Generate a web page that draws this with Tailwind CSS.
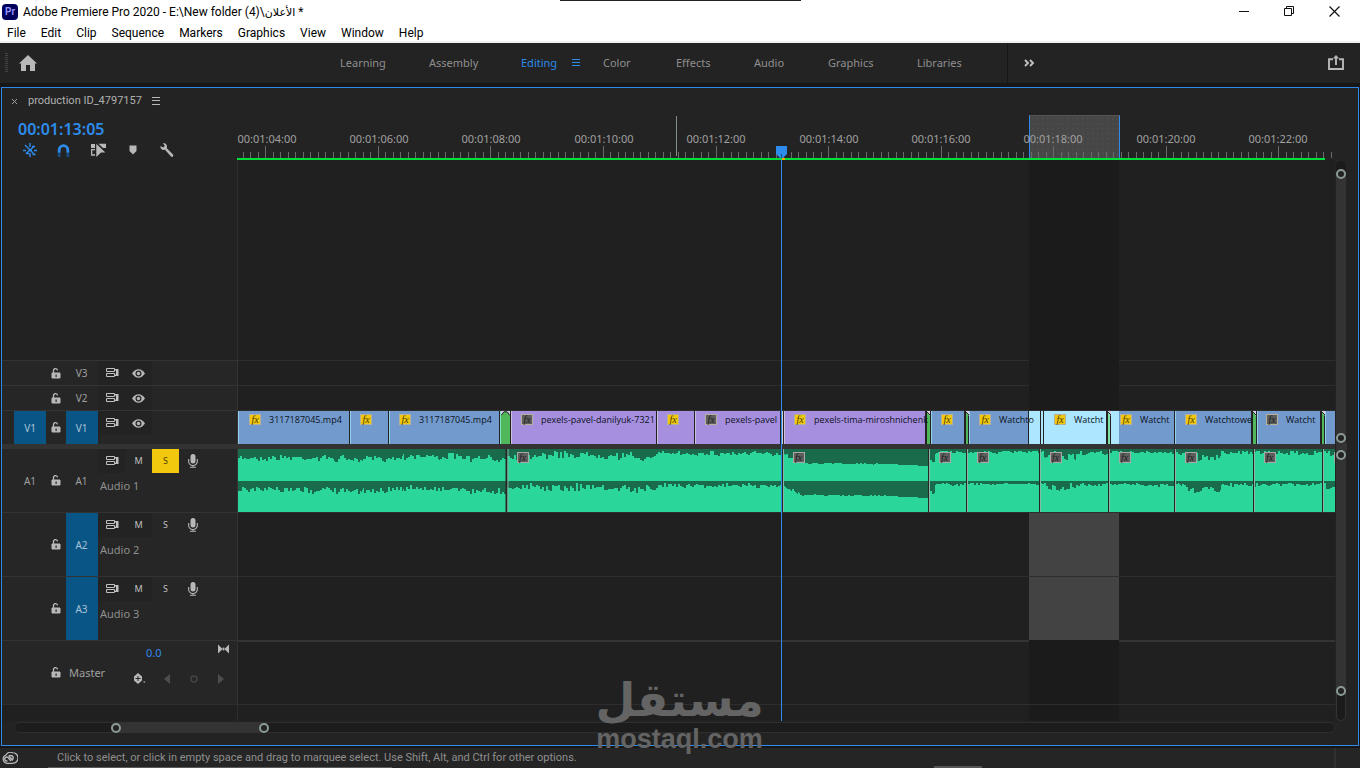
<!DOCTYPE html>
<html lang="en">
<head>
    <meta charset="UTF-8">
    <meta name="viewport" content="width=device-width, initial-scale=1.0">
    <title>Adobe Premiere Pro 2020</title>
    <script src="https://cdn.jsdelivr.net/npm/@tailwindcss/browser@4"></script>
</head>
<body class="relative flex h-screen flex-col overflow-hidden bg-[#171717] font-['Noto_Sans',sans-serif] text-[11px] leading-4 text-[#a0a0a0]">

    <!-- Shared icons -->
    <svg class="hidden">
        <symbol id="lock" viewBox="0 0 10 11"><path d="M1 5h8v5H1z" fill="#b8b8b8" stroke="#b8b8b8"/><path d="M2.5 5V3a2 2 0 0 1 4-.6" fill="none" stroke="#b8b8b8" stroke-width="1.3"/><path d="M4.5 6.5h1.2V9H4.5z" fill="#262626"/></symbol>
        <symbol id="sync" viewBox="0 0 13 10"><path d="M.5.5h8v3h-8zM.5 5.500h8v3h-8z" fill="none" stroke="#c0c0c0"/><path d="M8 1h4.500v7H8V6.500h2v-4H8z" fill="#c0c0c0"/></symbol>
        <symbol id="eye" viewBox="0 0 13 9"><path d="M0 4.500Q3 .3 6.500.3T13 4.500Q10 8.700 6.500 8.700T0 4.500z" fill="#b8b8b8"/><circle cx="6.500" cy="4.500" r="3" fill="#262626"/><circle cx="6.500" cy="4.500" r="1.700" fill="#b8b8b8"/></symbol>
        <symbol id="mic" viewBox="0 0 10 14"><rect x="2.500" width="5" height="9.500" rx="2.500" fill="#b8b8b8"/><path d="M.7 5v2.500a4.300 4 0 0 0 8.600 0V5M5 11v2.300M2 13.300h6" fill="none" stroke="#b8b8b8" stroke-width="1.100"/></symbol>
    </svg>

    <!-- Title bar and menus -->
    <header class="relative flex h-[43px] shrink-0 flex-col border-b-2 border-[#f0f0f0] bg-white font-[Roboto,'DejaVu_Sans',sans-serif] text-xs text-black">
        <div class="absolute top-0 left-[560px] h-px w-[241px] bg-[#222]"></div>
        <div class="flex h-6 items-center justify-between">
            <div class="flex items-center gap-[5px] pl-0.5">
                <div class="flex size-4 items-center justify-center rounded-sm bg-[#00005b] text-[10px] font-semibold text-[#9999ff]">Pr</div>
                <h1>Adobe Premiere Pro 2020 - E:\New folder (4)\<bdi class="text-[11px]">الأعلان</bdi> *</h1>
            </div>
            <div class="flex gap-[34px] pr-5">
                <button aria-label="Minimize"><svg class="h-3 w-[11px]" viewBox="0 0 11 12"><path d="M0 5.500h10" stroke="#111"/></svg></button>
                <button aria-label="Restore"><svg class="h-3 w-[11px]" viewBox="0 0 11 12"><path d="M.5 2.500h7v7h-7zM2.500 2.500v-2h7v7h-2" fill="none" stroke="#111"/></svg></button>
                <button aria-label="Close"><svg class="h-3 w-[11px]" viewBox="0 0 11 12"><path d="M.5.500l10 10M10.500.500l-10 10" stroke="#111" stroke-width="1.200"/></svg></button>
            </div>
        </div>
        <nav class="flex gap-[15px] pt-px pl-[7px]">
            <button>File</button><button>Edit</button><button>Clip</button><button>Sequence</button><button>Markers</button><button>Graphics</button><button>View</button><button>Window</button><button>Help</button>
        </nav>
    </header>

    <!-- Workspaces -->
    <div class="flex h-10 shrink-0 items-center bg-[#232323]">
        <div class="flex w-[340px] items-center gap-[11px] pl-[5px]">
            <div class="h-5 w-[3px] bg-[repeating-linear-gradient(#444_0_1px,#232323_1px_2px)]"></div>
            <button aria-label="Home"><svg class="h-4 w-[18px]" viewBox="0 0 18 16"><path d="M9 0l9 8.500h-2V16h-5v-6H7v6H2V8.500H0z" fill="#b8b8b8"/></svg></button>
        </div>
        <nav class="flex h-full items-center text-[#8f8f8f]">
            <button class="w-[89px] text-left">Learning</button>
            <button class="w-[92px] text-left">Assembly</button>
            <button class="flex w-[82px] items-center gap-[15px] text-[#2d8ceb]">Editing
                <svg class="h-2 w-2" viewBox="0 0 8 8"><path d="M0 .5h8M0 3.500h8M0 6.500h8" stroke="#2d8ceb"/></svg></button>
            <button class="w-[73px] text-left">Color</button>
            <button class="w-[78px] text-left">Effects</button>
            <button class="w-[74px] text-left">Audio</button>
            <button class="w-[89px] text-left">Graphics</button>
            <button class="w-[90px] text-left">Libraries</button>
        </nav>
        <button aria-label="More workspaces" class="h-full border-l border-[#161616] pl-4"><svg class="h-[9px] w-[11px]" viewBox="0 0 11 9"><path d="M1 1l3 3-3 3M6 1l3 3-3 3" fill="none" stroke="#c0c0c0" stroke-width="1.900"/></svg></button>
        <button aria-label="Quick export" class="mr-4 ml-auto"><svg class="h-4 w-4" viewBox="0 0 16 16"><path d="M5 4.200H1V14h14V4.200h-4M8 10V2" fill="none" stroke="#b8b8b8" stroke-width="1.900"/><path d="M4.800 3.500L8 0l3.200 3.500z" fill="#b8b8b8"/></svg></button>
    </div>

    <!-- Timeline panel -->
    <main class="mx-px mt-1 mb-0.5 flex min-h-0 flex-1 flex-col border border-[#2d8ceb] bg-[#232323]">
        <div class="flex h-[26px] shrink-0 items-center pl-[10px]">
            <button aria-label="Close tab"><svg class="size-[5px]" viewBox="0 0 5 5"><path d="M0 0l5 5M5 0L0 5" stroke="#a0a0a0"/></svg></button>
            <h2 class="ml-[11px] font-[Roboto,sans-serif] text-[#b0b0b0]">production ID_4797157</h2>
            <button aria-label="Panel menu" class="ml-[10px]"><svg class="h-2 w-2" viewBox="0 0 8 8"><path d="M0 .5h8M0 3.500h8M0 7.500h8" stroke="#b8b8b8"/></svg></button>
        </div>

        <div class="flex min-h-0 flex-1">
            <div class="relative flex min-w-0 flex-1 flex-col">
                <div class="flex h-[46px] shrink-0">
                    <div class="w-[236px] shrink-0 pl-4">
                        <div class="pt-1.5 text-base leading-[18px] font-semibold text-[#2d8ceb]">00:01:13:05</div>
                        <div class="mt-1 flex items-center pl-1">
                            <button aria-label="Insert as nests" class="w-[35px]"><svg class="h-4 w-4" viewBox="0 0 16 16"><path d="M3 3l10 10M12 4.500l-8 7M8 1v4M8 11v4M1 8.500h3M12 8.500h3M7 8.500h3M10 4.500h3M10.500 12.500h3M4 11.500h3" fill="none" stroke="#2d8ceb" stroke-width="1.400"/></svg></button>
                            <button aria-label="Snap" class="w-[34px]"><svg class="h-[13px] w-[13px]" viewBox="0 0 12 12"><path d="M2 8V5.500a4 4 0 0 1 8 0V8" fill="none" stroke="#2d8ceb" stroke-width="2.600"/><path d="M.7 8.500h2.600V12H.7zM8.700 8.500h2.600V12H8.700z" fill="#164f87"/></svg></button>
                            <button aria-label="Linked selection" class="w-[38px]"><svg class="h-[14px] w-[15px]" viewBox="0 0 15 14"><path d="M0 1h4v4H0zM7.500.8H15V5h-3z" fill="#b8b8b8"/><path d="M4 6.700H.7V12H4" fill="none" stroke="#b8b8b8" stroke-width="1.300"/><path d="M5.300.8L14.300 9.500H10L5.300 14z" fill="#b8b8b8"/></svg></button>
                            <button aria-label="Add marker" class="w-[30px]"><svg class="h-[10px] w-[8px]" viewBox="0 0 8 10"><path d="M.5.500h7V6L4 9.500.5 6z" fill="#b8b8b8"/></svg></button>
                            <button aria-label="Timeline settings"><svg class="h-4 w-4" viewBox="0 0 16 16"><path d="M5 1l-1 .5 1.800 2.300-1.500 1.700L1.500 4C1 6.500 3 8.500 6 7.800l6 6.700c1.200 1.200 3.200-.6 2-2L7.800 6.200C8.500 3.500 7.300 1.500 5 1z" fill="#b8b8b8"/></svg></button>
                        </div>
                    </div>
                    <!-- Time ruler -->
                    <div id="ruler" class="relative min-w-0 flex-1">
                        <div class="absolute top-px bottom-0 left-[791px] w-[91px] border-x border-t border-[#2d8ceb] border-t-[#555] bg-[#464646] bg-[radial-gradient(#4c4c4c_1px,#464646_1px)] bg-size-[5px_5px]"></div>
                        <svg id="ticks" class="absolute inset-0 h-full w-full"></svg>
                        <div class="absolute top-[2px] left-[438px] h-10 w-px bg-[#7f8f88]"></div>
                        <div class="absolute right-[10px] bottom-0 left-[-1px] h-0.5 bg-[#00e03c]"></div>
                        <div class="absolute bottom-0 left-[544px] h-0.5 w-[3px] bg-[#f5a800]"></div>
                    </div>
                </div>

                <!-- Tracks -->
                <div class="relative flex min-h-0 flex-1 flex-col bg-[#202020]">
                    <!-- In/out range -->
                    <div class="absolute top-0 bottom-0 left-[1027px] w-[90px] bg-[#1b1b1b]"></div>

                    <div class="w-[236px] flex-1 border-r border-[#2e2e2e] bg-[#222]"></div>

                    <div class="flex h-[25px] shrink-0">
                        <div class="flex w-[236px] shrink-0 items-center border-t border-r border-[#333] bg-[#262626] pl-11">
                            <button aria-label="Lock V3" class="w-5 pl-[5px]"><svg class="h-[11px] w-[10px]"><use href="#lock"/></svg></button>
                            <button class="w-8 pr-px text-[10px]">V3</button>
                            <button aria-label="Sync lock V3" class="flex h-full w-[27px] items-center bg-[#232323] pl-2"><svg class="h-[10px] w-[13px]"><use href="#sync"/></svg></button>
                            <button aria-label="Toggle output V3" class="flex h-full w-[27px] items-center bg-[#232323] pl-[7px]"><svg class="h-[9px] w-[13px]"><use href="#eye"/></svg></button>
                        </div>
                        <div class="w-[791px] border-t border-[#2e2e2e]"></div>
                        <div class="ml-[90px] flex-1 border-t border-[#2e2e2e]"></div>
                    </div>
                    <div class="flex h-[25px] shrink-0">
                        <div class="flex w-[236px] shrink-0 items-center border-t border-r border-[#333] bg-[#262626] pl-11">
                            <button aria-label="Lock V2" class="w-5 pl-[5px]"><svg class="h-[11px] w-[10px]"><use href="#lock"/></svg></button>
                            <button class="w-8 pr-px text-[10px]">V2</button>
                            <button aria-label="Sync lock V2" class="flex h-full w-[27px] items-center bg-[#232323] pl-2"><svg class="h-[10px] w-[13px]"><use href="#sync"/></svg></button>
                            <button aria-label="Toggle output V2" class="flex h-full w-[27px] items-center bg-[#232323] pl-[7px]"><svg class="h-[9px] w-[13px]"><use href="#eye"/></svg></button>
                        </div>
                        <div class="w-[791px] border-t border-[#2e2e2e]"></div>
                        <div class="ml-[90px] flex-1 border-t border-[#2e2e2e]"></div>
                    </div>

                    <!-- V1 -->
                    <div class="relative flex h-[34px] shrink-0">
                        <div class="flex w-[236px] shrink-0 items-center border-t border-r border-[#333] bg-[#262626] pl-3 text-[10px]">
                            <button class="h-full w-8 bg-[#095586] text-[#a9c3d6]">V1</button>
                            <button aria-label="Lock V1" class="w-5 pl-[5px]"><svg class="h-[11px] w-[10px]"><use href="#lock"/></svg></button>
                            <button class="h-full w-8 bg-[#095586] pr-px text-[#a9c3d6]">V1</button>
                            <button aria-label="Sync lock V1" class="flex h-6 w-[27px] items-center self-start bg-[#232323] pl-2"><svg class="h-[10px] w-[13px]"><use href="#sync"/></svg></button>
                            <button aria-label="Toggle output V1" class="flex h-6 w-[27px] items-center self-start bg-[#232323] pl-[7px]"><svg class="h-[9px] w-[13px]"><use href="#eye"/></svg></button>
                        </div>
                        <div id="clips" class="flex min-w-0 flex-1 overflow-hidden border-t border-[#2e2e2e] font-['Open_Sans',sans-serif] text-[9px] text-[#0b1220]"></div>
                    </div>

                    <div class="relative h-[5px] shrink-0 bg-[#333]"></div>

                    <!-- A1 -->
                    <div class="relative flex h-[63px] shrink-0">
                        <div class="flex w-[236px] shrink-0 items-center border-r border-[#333] bg-[#262626] pl-3">
                            <button class="w-8 text-[10px]">A1</button>
                            <button aria-label="Lock A1" class="w-5 pl-[5px]"><svg class="h-[11px] w-[10px]"><use href="#lock"/></svg></button>
                            <button class="w-8 pr-px text-[10px]">A1</button>
                            <div class="h-full">
                                <div class="flex h-6 items-center text-[9px] text-[#c0c0c0]">
                                    <button aria-label="Sync lock A1" class="flex h-full w-[27px] items-center bg-[#232323] pl-2"><svg class="h-[10px] w-[13px]"><use href="#sync"/></svg></button>
                                    <button class="h-full w-[27px]">M</button>
                                    <button class="h-full w-[27px] bg-[#f2c80f] text-[#4d4008]">S</button>
                                    <button aria-label="Record A1" class="w-[27px] pl-[9px]"><svg class="h-[14px] w-[10px]"><use href="#mic"/></svg></button>
                                </div>
                                <div class="pt-[5px] pl-[2px] text-[#8f8f8f]">Audio 1</div>
                            </div>
                        </div>
                        <div class="relative min-w-0 flex-1 overflow-hidden bg-[#2bd69a]">
                            <svg id="waves" class="absolute inset-0 h-full w-full"></svg>
                        </div>
                    </div>

                    <!-- A2 -->
                    <div class="relative flex h-16 shrink-0">
                        <div class="flex w-[236px] shrink-0 items-center border-t border-r border-[#333] bg-[#262626] pl-11">
                            <button aria-label="Lock A2" class="w-5 pl-[5px]"><svg class="h-[11px] w-[10px]"><use href="#lock"/></svg></button>
                            <button class="h-full w-8 bg-[#095586] pr-px text-[10px] text-[#a9c3d6]">A2</button>
                            <div class="h-full">
                                <div class="flex h-6 items-center text-[9px] text-[#c0c0c0]">
                                    <button aria-label="Sync lock A2" class="flex h-full w-[27px] items-center bg-[#232323] pl-2"><svg class="h-[10px] w-[13px]"><use href="#sync"/></svg></button>
                                    <button class="h-full w-[27px] bg-[#232323]">M</button>
                                    <button class="h-full w-[27px]">S</button>
                                    <button aria-label="Record A2" class="w-[27px] pl-[9px]"><svg class="h-[14px] w-[10px]"><use href="#mic"/></svg></button>
                                </div>
                                <div class="pt-[5px] pl-[2px] text-[#8f8f8f]">Audio 2</div>
                            </div>
                        </div>
                        <div class="w-[791px] border-t border-[#2e2e2e]"></div>
                        <div class="w-[90px] border-t border-[#2e2e2e] bg-[#434343]"></div>
                        <div class="flex-1 border-t border-[#2e2e2e]"></div>
                    </div>
                    <!-- A3 -->
                    <div class="relative flex h-16 shrink-0">
                        <div class="flex w-[236px] shrink-0 items-center border-t border-r border-[#333] bg-[#262626] pl-11">
                            <button aria-label="Lock A3" class="w-5 pl-[5px]"><svg class="h-[11px] w-[10px]"><use href="#lock"/></svg></button>
                            <button class="h-full w-8 bg-[#095586] pr-px text-[10px] text-[#a9c3d6]">A3</button>
                            <div class="h-full">
                                <div class="flex h-6 items-center text-[9px] text-[#c0c0c0]">
                                    <button aria-label="Sync lock A3" class="flex h-full w-[27px] items-center bg-[#232323] pl-2"><svg class="h-[10px] w-[13px]"><use href="#sync"/></svg></button>
                                    <button class="h-full w-[27px] bg-[#232323]">M</button>
                                    <button class="h-full w-[27px]">S</button>
                                    <button aria-label="Record A3" class="w-[27px] pl-[9px]"><svg class="h-[14px] w-[10px]"><use href="#mic"/></svg></button>
                                </div>
                                <div class="pt-[5px] pl-[2px] text-[#8f8f8f]">Audio 3</div>
                            </div>
                        </div>
                        <div class="w-[791px] border-t border-[#2e2e2e]"></div>
                        <div class="w-[90px] border-t border-[#2e2e2e] bg-[#434343]"></div>
                        <div class="flex-1 border-t border-[#2e2e2e]"></div>
                    </div>

                    <!-- Master -->
                    <div class="relative flex h-16 shrink-0">
                        <div class="flex w-[236px] shrink-0 items-center border-t border-r border-[#333] bg-[#262626] pl-11">
                            <button aria-label="Lock Master" class="w-5 pl-[5px]"><svg class="h-[11px] w-[10px]"><use href="#lock"/></svg></button>
                            <div class="w-[55px] pl-[3px]">Master</div>
                            <div class="flex h-full flex-1 flex-col justify-between pt-[2px] pb-5">
                                <div class="flex justify-between pr-2 pl-[25px]">
                                    <input aria-label="Master volume" value="0.0" class="mt-[2px] w-8 bg-transparent text-[#2d8ceb]">
                                    <svg class="h-3 w-[11px]" viewBox="0 0 12 12"><path d="M0 1l5 5-5 5zM12 1L7 6l5 5z" fill="#b8b8b8"/><path d="M5 6h2" stroke="#b8b8b8" stroke-width="3"/></svg>
                                </div>
                                <div class="flex items-center pl-[13px]">
                                    <button aria-label="Keyframe options" class="w-[30px]"><svg class="h-[11px] w-3" viewBox="0 0 12 11"><path d="M4 0l4 3.500v4L4 11 0 7.500v-4z" fill="#b8b8b8"/><path d="M4 3v5M1.500 5.500h5" stroke="#262626"/><path d="M9 8.500h2.500L10.300 10z" fill="#b8b8b8"/></svg></button>
                                    <button aria-label="Previous keyframe" class="w-[26px]"><svg class="h-[10px] w-1.5" viewBox="0 0 6 10"><path d="M6 0v10L0 5z" fill="#4d4d4d"/></svg></button>
                                    <button aria-label="Add keyframe" class="w-7"><svg class="size-2" viewBox="0 0 8 8"><circle cx="4" cy="4" r="3" fill="none" stroke="#444" stroke-width="1.500"/></svg></button>
                                    <button aria-label="Next keyframe"><svg class="h-[10px] w-1.5" viewBox="0 0 6 10"><path d="M0 0v10l6-5z" fill="#4d4d4d"/></svg></button>
                                </div>
                            </div>
                        </div>
                        <div class="w-[791px] border-t-2 border-[#343434]"></div>
                        <div class="ml-[90px] flex-1 border-t-2 border-[#343434]"></div>
                    </div>
                    <div class="relative flex h-[17px] shrink-0 border-t border-[#2e2e2e]">
                        <div class="w-[236px] border-r border-[#2e2e2e]"></div>
                    </div>

                    <!-- Playhead -->
                    <div class="absolute top-0 bottom-0 left-[779px] w-px bg-[#2d8ceb]"></div>
                    <svg class="absolute -top-[14px] left-[774px] h-3 w-[11px]" viewBox="0 0 11 12"><path d="M0 0h11v8L7 12H4L0 8z" fill="#2d8ceb"/><path d="M5.500 8v4" stroke="#174a80"/></svg>
                </div>
            </div>

            <!-- Vertical scrollbars -->
            <div class="flex w-[23px] shrink-0 flex-col pt-[47px] pl-px">
                <div class="flex w-[10px] flex-1 flex-col rounded-t-full bg-[#1b1b1b] pt-2">
                    <div class="flex flex-1 flex-col justify-between rounded-t-full bg-[#333]">
                        <div class="size-[10px] rounded-full border-2 border-[#8c9a94] bg-[#232323]"></div>
                        <div class="size-[10px] rounded-full border-2 border-[#8c9a94] bg-[#232323]"></div>
                    </div>
                </div>
                <div class="h-[7px] w-[11px] bg-[#333]"></div>
                <div class="flex h-[271px] w-[10px] flex-col rounded-b-full border border-[#333] bg-[#1b1b1b] pb-6">
                    <div class="-mx-px -mt-px flex flex-1 flex-col justify-between rounded-b-full bg-[#333]">
                        <div class="size-[10px] rounded-full border-2 border-[#8c9a94] bg-[#232323]"></div>
                        <div class="size-[10px] rounded-full border-2 border-[#8c9a94] bg-[#232323]"></div>
                    </div>
                </div>
            </div>
        </div>

        <!-- Horizontal zoom scrollbar -->
        <div class="h-6 shrink-0 pt-px pr-[23px] pl-3">
            <div class="flex h-[11px] rounded-full border border-[#2e2e2e] bg-[#1c1c1c] pl-24">
                <div class="-my-px flex h-[11px] w-[158px] items-center justify-between rounded-full bg-[#333]">
                    <div class="size-[10px] rounded-full border-2 border-[#8c9a94] bg-[#232323]"></div>
                    <div class="size-[10px] rounded-full border-2 border-[#8c9a94] bg-[#232323]"></div>
                </div>
            </div>
        </div>
    </main>

    <!-- Status bar -->
    <footer class="relative flex h-5 shrink-0 items-center bg-[#252525] pl-0.5 text-[#8f8f8f]">
        <svg class="h-3 w-4" viewBox="0 0 16 12"><path d="M5 11.300A4.300 4.300 0 0 1 4 3 5.500 5.500 0 0 1 10.700.7a5.300 5.300 0 0 1 0 10.600z" fill="none" stroke="#b8b8b8" stroke-width="1.300"/><path d="M9 9L5.800 5.300a2 2 0 1 0-.3 3.500M6.500 4.500a2.600 2.600 0 1 1 3.800 3.500L7.500 4.700" fill="none" stroke="#b8b8b8" stroke-width="1.400"/></svg>
        <p class="ml-[39px] font-[Roboto,sans-serif]">Click to select, or click in empty space and drag to marquee select. Use Shift, Alt, and Ctrl for other options.</p>
        <div class="mr-6 ml-auto h-full w-0.5 bg-[#303030]"></div>
        <div class="absolute bottom-0 left-12 h-px w-[344px] bg-[#5a5a5a]"></div>
        <div class="absolute bottom-0 left-[934px] h-0.5 w-12 bg-[#555]"></div>
    </footer>

    <!-- Watermark -->
    <div class="pointer-events-none absolute bottom-4 left-[597px] flex w-[165px] flex-col items-center text-[#646464]">
        <div lang="ar" dir="rtl" class="font-['DejaVu_Sans',sans-serif] text-[46px] leading-[52px] font-bold">مستقل</div>
        <div class="font-['Liberation_Sans',sans-serif] text-[27px] leading-[26px] font-bold">mostaql.com</div>
    </div>

    <script>
        // Ruler: a labelled tick every 15 divisions
        const ticks = document.getElementById('ticks');
        const labels = ['04', '06', '08', '10', '12', '14', '16', '18', '20', '22'];
        let marks = '';
        for (let i = 0; i < 146; i++) {
            const x = Math.floor(5.2 + i * 7.505) + 0.5;
            const major = i % 15 === 3;
            marks += `<path d="M${x} ${major ? 32 : 38}V44" stroke="#6a6a6a"/>`;
        }
        ticks.innerHTML = marks;
        labels.forEach((s, i) => {
            const el = document.createElement('span');
            el.className = 'absolute top-[17px] -translate-x-1/2 text-[#a0a0a0]';
            el.style.left = (29 + Math.floor(i * 112.4)) + 'px';
            el.textContent = `00:01:${s}:00`;
            document.getElementById('ruler').appendChild(el);
        });

        // Video clips: kind, width, fx badge, badge indent, name
        const clips = [
            ['blue', 112, 'y', 10, '3117187045.mp4'],
            ['blue', 39, 'y', 9, ''],
            ['blue', 111, 'y', 9, '3117187045.mp4'],
            ['fade', 11],
            ['purple', 146, 'g', 9, 'pexels-pavel-danilyuk-7321'],
            ['purple', 38, 'y', 9, ''],
            ['purple', 86, 'g', 9, 'pexels-pavel'],
            ['gap', 3],
            ['purple', 142, 'y', 9, 'pexels-tima-miroshnichenk'],
            ['cut', 5],
            ['blue', 34, 'y', 9, ''],
            ['cut', 4],
            ['blue', 60, 'y', 9, 'Watchto'],
            ['light', 12],
            ['light', 3],
            ['light', 63, 'y', 10, 'Watcht'],
            ['litcut', 4],
            ['half', 64, 'y', 9, 'Watcht'],
            ['blue', 77, 'y', 9, 'Watchtowe'],
            ['cut', 5],
            ['blue', 64, 'g', 8, 'Watcht'],
            ['cut', 4],
            ['blue', 20],
        ];
        const fills = {
            blue: 'bg-[#739acd] border-r border-l border-l-[#93d0ea] border-r-[#222]',
            purple: 'bg-[#a78fe0] border-r border-l border-l-[#c9c0dc] border-r-[#222]',
            light: 'bg-[#ade7ff] border-r border-r-[#222]',
            half: 'bg-linear-to-r from-[#ade7ff] from-[8px] to-[#739acd] to-[8px] border-r border-r-[#222]',
            cut: 'bg-[#50b85a] border-x border-[#222]',
            litcut: 'bg-[#7fe3a8] border-x border-[#222]',
            gap: 'bg-[#d5cce4] border-x border-[#222]',
            fade: 'bg-[#50b85a] border-l border-r border-l-[#7fe3c8] border-r-[#222]',
        };
        const badges = {
            y: 'bg-[#f2c80f] text-[#4a3d00]',
            g: 'bg-[#5e5e5e] text-[#1d1d1d]',
        };
        const row = document.getElementById('clips');
        clips.forEach(([kind, width, fx, indent, name]) => {
            const clip = document.createElement('div');
            clip.className = 'relative flex h-full shrink-0 items-start pt-[3px] whitespace-nowrap ' + fills[kind];
            clip.style.width = width + 'px';
            if (fx) {
                clip.style.paddingLeft = indent + 'px';
                clip.innerHTML = `<span class="flex h-[11px] w-3 shrink-0 items-center justify-center border border-[#b5b09a] font-['Liberation_Serif',serif] text-[10px] leading-[8px] italic ${badges[fx]}">fx</span><span class="relative z-10 ml-2 leading-3">${name}</span>`;
            }
            if (kind === 'fade') {
                clip.innerHTML = '<svg class="absolute inset-x-0 top-0 h-[5px] w-full" viewBox="0 0 9 5"><path d="M0 0h9v4.500L6 .8H3L0 4.500z" fill="#cfc3e6"/><path d="M0 4.500L3 .8h3l3 3.700" fill="none" stroke="#222"/></svg>';
            }
            if (kind === 'cut' || kind === 'litcut') {
                clip.innerHTML = '<svg class="absolute -left-px top-0 h-[5px] w-1" viewBox="0 0 4 5"><path d="M0 0h4v5z" fill="#d8cfe6"/><path d="M0 0l4 4" stroke="#222"/></svg>';
            }
            row.appendChild(clip);
        });

        // Waveform silhouettes, [from, to, start depth, end depth, jitter]
        const levels = [
            [0, 30, 9, 9, 4], [30, 90, 9, 9, 4], [90, 125, 9, 11, 4], [125, 165, 9, 9, 4], [165, 230, 7, 8, 4], [230, 268, 10, 10, 4],
            [268, 350, 6, 6, 5], [350, 420, 6, 9, 5], [420, 544, 4, 5, 3],
            [544, 562, 4, 13, 2], [562, 650, 14, 15, 1], [650, 690, 15, 17, 0], [690, 697, 11, 11, 3],
            [697, 802, 3, 3, 2], [802, 806, 3, 3, 1], [806, 838, 6, 8, 6], [838, 870, 4, 4, 3], [870, 937, 3, 4, 2],
            [937, 950, 3, 5, 3], [950, 983, 8, 8, 6], [983, 1076, 3, 4, 3], [1076, 1088, 3, 3, 2], [1088, 1400, 6, 6, 5],
        ];
        let seed = 7;
        const rand = () => (seed = (seed * 16807) % 2147483647) / 2147483647;
        function wave(top) {
            let d = `M0 ${top}`;
            let last = 0;
            for (const [from, to, a, b, jitter] of levels) {
                for (let x = from; x < to; x++) {
                    last = x % 2 ? last : (rand() + rand() - 1) * jitter;
                    const y = a + (b - a) * (x - from) / (to - from) + last;
                    d += `V${top + Math.max(2, Math.round(y))}H${x + 1}`;
                }
            }
            return `<path d="${d}V${top}z" fill="#196b4c"/>`;
        }
        let art = wave(0) + '<path d="M0 33h3000" stroke="#196b4c" stroke-width="2"/>' + wave(32);
        art += '<path d="M268.500 0v63" stroke="#262626" stroke-width="2"/><path d="M270 0v63" stroke="#8ab8a6"/>';
        for (const x of [544, 690, 728, 801, 870, 936, 1015, 1084]) {
            art += `<path d="M${x}.5 0v63" stroke="#262626"/><path d="M${x + 1}.5 0v63" stroke="#8ab8a6"/>`;
        }
        for (const x of [279, 555, 701, 739, 812, 881, 947, 1026]) {
            art += `<rect x="${x}.5" y="3.500" width="11" height="10" fill="#5e5e5e" stroke="#a8a8a8"/><text x="${x + 2}" y="12" font-family="Liberation Serif" font-style="italic" font-size="10" fill="#1d1d1d">fx</text>`;
        }
        art += '<path d="M1096.500 3.500v10" stroke="#a8a8a8"/>';
        document.getElementById('waves').innerHTML = art;
    </script>
</body>
</html>
